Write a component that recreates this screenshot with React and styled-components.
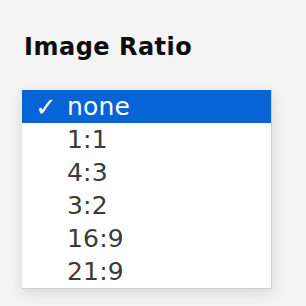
import styled, { createGlobalStyle } from "styled-components";

const GlobalStyle = createGlobalStyle`
  html, body {
    margin: 0;
    padding: 0;
    background: #f4f4f4;
  }
  body {
    font-family: "DejaVu Sans", Verdana, sans-serif;
  }
`;

const ratios = ["none", "1:1", "4:3", "3:2", "16:9", "21:9"];

export default function App() {
  const selected = "none";

  return (
    <>
      <GlobalStyle />
      <Page>
        <Title>Image Ratio</Title>
        <Menu>
          {ratios.map((r) => (
            <Option key={r} $active={r === selected}>
              <Check>{r === selected ? "✓" : ""}</Check>
              <span>{r}</span>
            </Option>
          ))}
        </Menu>
      </Page>
    </>
  );
}

const Page = styled.div`
  width: 306px;
  height: 306px;
  box-sizing: border-box;
  padding: 30px 0 0 22px;
  display: flex;
  flex-direction: column;
`;

const Title = styled.h1`
  margin: 0 0 26px 2px;
  font-size: 24px;
  line-height: 34px;
  font-weight: bold;
  color: #0d0d0d;
  letter-spacing: 0.5px;
`;

const Menu = styled.div`
  width: 249px;
  background: #fff;
  border-right: 1px solid #cfcfcf;
  border-bottom: 1px solid #cfcfcf;
  box-shadow: 0 4px 14px rgba(0, 0, 0, 0.12);
  display: flex;
  flex-direction: column;
`;

const Option = styled.div`
  height: 33px;
  display: flex;
  align-items: center;
  padding-left: 13px;
  font-size: 25px;
  letter-spacing: 0.2px;
  background: ${(p) => (p.$active ? "#0764d6" : "transparent")};
  color: ${(p) => (p.$active ? "#fff" : "#3a3a3a")};
`;

const Check = styled.span`
  width: 32px;
  font-size: 26px;
  line-height: 1;
`;
